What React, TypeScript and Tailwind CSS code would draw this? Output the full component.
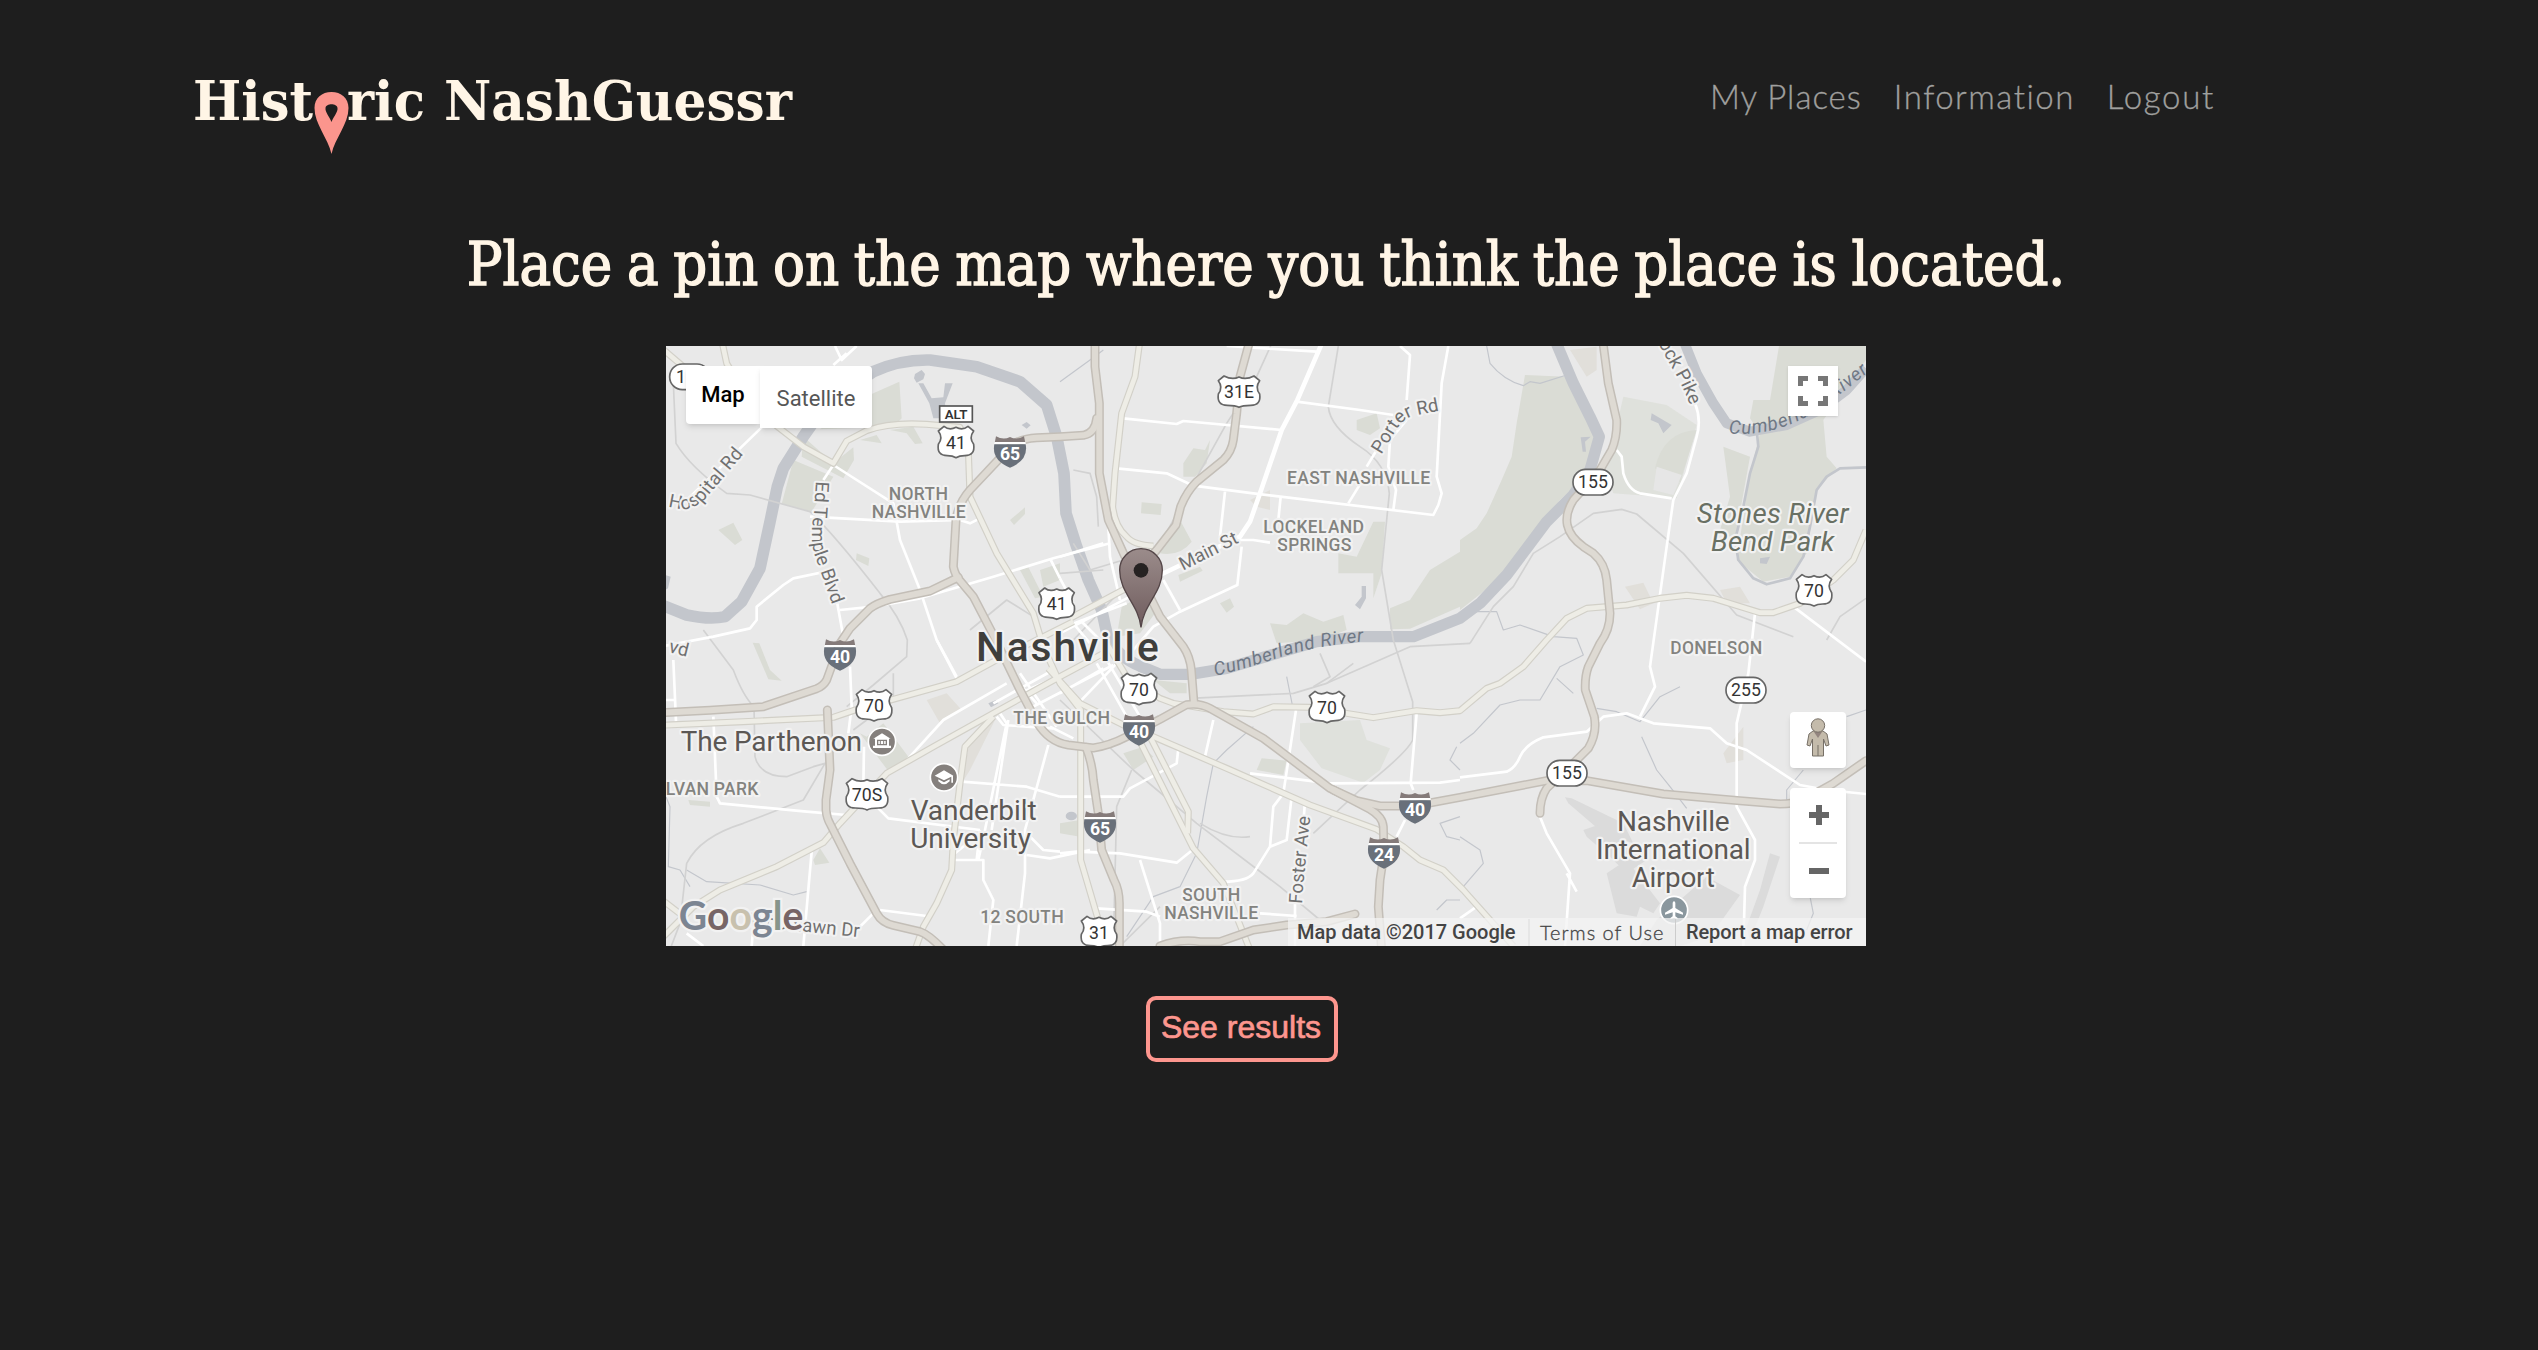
import React from "react";

const HIGHWAYS = [
  "M1305 0V80L1318 190V400L1345 540L1395 650L1470 770L1500 830L1570 920Q1590 950 1594 990L1602 1090",
  "M1310 235Q1305 280 1270 286L1200 290L1130 293Q1090 295 1060 312L1010 365L930 450Q895 490 888 540L880 680Q885 705 900 722L940 770L1000 885L1080 1050L1130 1145Q1165 1205 1225 1215L1300 1224Q1350 1216 1400 1190L1500 1138L1580 1094Q1620 1088 1650 1105L1810 1195L1930 1285L2010 1345L2090 1382L2160 1398H2260L2400 1372L2660 1322H2780L3010 1362L3240 1382L3360 1392Q3400 1392 3430 1380L3520 1330L3618 1262",
  "M895 712L810 753L690 778Q650 790 630 805L570 865L540 910L500 1020Q490 1038 470 1046L310 1100L150 1111L0 1118",
  "M502 1110L510 1290L498 1380V1410Q500 1435 512 1455L570 1570L650 1720Q665 1748 700 1756L780 1775Q810 1785 860 1840",
  "M1278 1222Q1297 1270 1300 1320L1315 1420L1325 1530L1362 1620Q1378 1650 1378 1690V1830",
  "M1500 1818Q1560 1796 1620 1805H1680L1780 1770L1880 1755L2000 1745L2085 1722",
  "M2020 1350L2130 1408Q2168 1430 2170 1460L2172 1540L2160 1620L2155 1700L2165 1830",
  "M1770 0L1740 110L1730 220L1720 300Q1715 335 1690 360L1610 425Q1580 455 1562 500L1548 555L1490 630L1430 700",
  "M2828 0L2845 130L2870 240Q2872 290 2855 330L2820 390L2740 480Q2715 520 2722 555T2770 620L2800 640Q2835 670 2840 720L2850 820Q2850 870 2820 910L2785 980Q2774 1010 2776 1050L2803 1130Q2812 1180 2785 1225L2740 1270L2660 1345Q2640 1375 2640 1420",
];
const ARTERIALS = [
  "M185 0L200 70L260 170L350 258L430 320L520 370L560 303L620 272Q690 246 800 253L900 262L925 330L930 470L1010 640L1120 820L1150 920L1200 1030L1262 1110L1262 1560L1315 1740",
  "M0 20L70 80",
  "M1440 0L1425 110L1385 220L1365 400L1358 500Q1365 560 1400 590Q1420 615 1480 618",
  "M1230 835L1380 755L1450 720",
  "M0 1156L250 1145L520 1132L600 1105L700 1078L890 1025L1000 965L1240 845",
  "M0 1800L100 1700L180 1650L350 1580L490 1508L540 1450L680 1300L820 1220L1000 1120L1200 1010L1340 935",
  "M0 1675L65 1725",
  "M1000 1130L915 1220L900 1330L880 1500L875 1590L830 1690L790 1760L765 1830",
  "M1165 985L1260 1090L1400 1160L1480 1190L1700 1285L1950 1395L2150 1468L2230 1520L2280 1560L2350 1590L2410 1650L2560 1818",
  "M1440 1205L1600 1525L1690 1630L1770 1830",
  "M1470 1190L1585 1415L1583 1480",
  "M1340 910L1400 1010L1500 1075L1540 1090L1690 1115L1780 1122L1840 1100L1950 1102L2060 1120L2140 1133L2270 1112L2340 1118L2400 1112L2480 1045L2520 1030L2590 980L2660 900L2720 835L2780 805L2900 795L3000 775L3080 766L3160 775L3300 818H3340L3420 790L3520 720L3580 660L3618 570",
];
const STREETS = [
  "M0 920L160 890L270 865L290 840V800L370 735L400 715L520 690",
  "M520 375L490 420M520 375L700 490L720 600L780 750L830 900L890 1015",
  "M305 262L60 500M525 18L545 60L590 18M520 75L560 40",
  "M450 530L720 545L900 540L930 550L960 535",
  "M530 780L550 890M540 810L640 800L780 775L1000 710L1180 655L1350 610",
  "M1170 655L1200 715M40 960L48 1145M0 1080H45M160 1130L170 1370L180 1390L440 1415L560 1425",
  "M570 980L575 1100L565 1180M612 1220L610 1340M745 1255L850 1140L1040 1030M830 900L890 1010",
  "M650 1400L685 1435L960 1470M905 1325L1100 1340L1200 1370M1020 1120L1040 1150L975 1470L955 1560M1045 1140L995 1470M1010 1130L1030 1155L1180 1165",
  "M455 1535L430 1818M660 1710L800 1728M640 1720L590 1770M880 1560H970V1620L1000 1680L985 1818",
  "M1165 1215L1150 1270L1095 1470L1095 1600L1070 1818M1110 1490L1150 1530L1200 1535M1100 1545L1170 1555L1290 1530",
  "M80 1780L130 1818M280 1760L275 1818M885 1540L960 1480M960 1470L950 1560",
  "M1390 235L1550 252L1570 243L1865 270M1370 385L1520 400L1600 437L1780 460L2320 525L2335 495L2345 460L2330 410L2345 130L2365 18",
  "M1695 455L1680 590M1862 470L1855 540M1700 18L1970 35M1910 185L2100 210L2200 225M2220 18L2250 45L2240 180M2340 200H2290",
  "M2120 380L2150 330M2120 400L2065 490M2240 240L2190 300L2185 380L2208 450L2200 510",
  "M1700 600L1780 600L1830 608M1745 620L1732 735L1560 815L1480 860L1420 930M1510 720L1560 810",
  "M1345 560L1350 650L1380 780M1200 650L1330 610M1200 880L1410 770M1200 715L1240 790M1240 850L1290 910M1260 840L1320 900M1190 870L1400 790",
  "M1050 1000L1130 1090M1000 1090L1180 990M1170 1160L1240 1195M1260 1085L1370 970M1100 1110L1360 975M1080 1060L1330 950M1080 1000L1190 1160M1340 960L1440 1130M1310 970L1400 1130M1200 1060L1330 985",
  "M1200 1370H1390L1410 1345L1550 1270L1555 1225M1200 1540L1250 1535L1380 1540L1550 1568L1600 1528M1440 1560L1500 1750L1500 1818M1310 1705L1460 1715L1500 1730",
  "M1660 1140L1635 1250M1908 1110L1870 1360L1840 1400L1830 1520L1780 1600Q1760 1625 1690 1625M1895 1370L1880 1500L1830 1520M1935 1385L1930 1450M1770 1300L2010 1330L2340 1328L2400 1320",
  "M2270 1120L2252 1330L2260 1350M2235 1440L2210 1490M1905 1690V1818M1800 1720L1910 1728",
  "M2400 1312L2540 1295Q2565 1285 2580 1250T2650 1192L2780 1175L2830 1130L2900 1120L2980 1150L3150 1165L3200 1210L3260 1230L3420 1335L3500 1350L3618 1362",
  "M2870 330L2885 350L2890 400Q2905 450 2940 460L3035 475M3105 190Q3125 240 3110 290L3080 400L3040 480L3020 620L2970 980L2985 1040L2940 1130",
  "M3285 820L3265 1000L3230 1150L3230 1400L3285 1500L3285 1560L3255 1640L3250 1818M3400 800L3618 965M2640 1430L2660 1480L2730 1600L2715 1818M2720 1600L2750 1655",
  "M2400 1735L2450 1700",
];
const RAILS = [
  "M40 130L48 310Q90 380 200 460L270 465L450 515Q520 580 660 760Q720 830 742 900L740 950L640 1035L560 1100",
  "M130 870L220 990Q250 1070 282 1100L285 1250Q300 1310 380 1310L460 1280L495 1270L430 1380L250 1450Q120 1490 80 1570L60 1750L18 1860",
  "M700 1000V1080L580 1170M930 870L1040 780L1120 830",
  "M2035 18L2005 200Q2010 260 2100 320Q2180 370 2188 460L2165 690L2200 900L2258 1085V1200Q2240 1240 2100 1350L1960 1480",
  "M1832 18L1790 110L1700 250L1600 430L1480 650L1240 900",
  "M1200 1080L1420 1290L1610 1450L1860 1640L1980 1740M1620 1450Q1700 1500 1770 1490M1590 1075L1900 1060L2000 1030L2250 920L2430 910",
  "M2430 910L2500 800L2560 740L2620 640L2700 590L2800 520L2885 508L2930 522L3070 640L3230 825L3400 890M3618 775L3540 830L3500 900",
  "M1240 390L1290 400L1310 470L1315 560M1200 700L1330 690M1240 610L1290 690L1390 660",
  "M1415 1290L1370 1400L1360 1818M1380 1818L1500 1700M1980 940L2010 1010L1960 1040M2000 1030L2080 970",
];
const CREEKS = [
  "M2480 18L2490 70Q2530 120 2590 137L2610 125L2640 130L2720 105",
  "M80 1590L140 1625L300 1635L400 1665L440 1655M18 1370L30 1400L25 1580L60 1590L90 1640",
  "M1200 125L1290 60L1330 30M1880 1010L1900 1110M1780 1160L1700 1230L1660 1270L1640 1370L1610 1540L1560 1640L1480 1670L1400 1790",
  "M2440 815L2510 815L2530 870L2580 855L2680 890L2750 895L2770 945L2700 980L2640 1080L2580 1080L2520 1095L2440 1180L2400 1210",
  "M2690 1015L2740 1060M2810 1105L2870 1115L2940 1145L2960 1120L3000 1070L3060 1040M2945 1190L2990 1290L3030 1340L3080 1405",
  "M2400 1490L2460 1530L2470 1570L2410 1640M3618 1110L3560 1130M3380 1390V1350L3430 1290M3450 1670L3460 1720L3440 1770",
  "M2390 1220L2370 1260L2400 1290M2400 1430L2340 1450L2360 1490L2400 1500M2330 1710L2360 1680L2400 1680",
];
const PARKS = [
  "M400 360L520 410L455 515L365 492Z",
  "M430 290L520 370L580 322L582 360L550 415L425 350Z",
  "M640 160L718 125L725 235L700 260L480 268Z",
  "M600 300L650 285L665 310ZM690 270L760 260L788 310L765 312L740 280Z",
  "M175 570L220 548L247 600L225 615ZM1050 540L1095 502L1095 522L1062 555ZM590 640L628 655L625 678L588 660Z",
  "M1080 690L1105 682L1150 770L1125 775ZM1140 690L1200 670V720L1150 740ZM1385 800L1440 770L1500 800L1440 880L1370 890Z",
  "M278 908L298 910L330 990L365 1022L325 1018Z",
  "M620 1190L670 1150L745 1250L690 1300L600 1180Z",
  "M460 1560L480 1525L508 1568L465 1575ZM85 1380L150 1385V1400L90 1395Z",
  "M1570 370L1600 325L1635 330L1650 300L1640 370L1605 410L1570 410Z",
  "M1445 487L1505 492L1502 525L1443 520Z",
  "M1560 540L1595 605Q1560 650 1500 640ZM1555 705L1620 680L1628 692L1560 725ZM1680 790L1710 775L1722 800L1700 818Z",
  "M2090 240L2150 220L2160 265L2130 285L2090 270Z",
  "M2140 545L2175 545L2165 700L2140 775V700H2035V640L2090 650Z",
  "M2190 805L2250 780L2310 690L2400 635V800L2250 866L2190 868Z",
  "M1830 850L1880 855L1930 820L1990 845L2050 825L2060 870L1980 900L1850 910Z",
  "M2595 105L2720 110L2820 260L2790 400L2700 480L2540 700L2400 810V600L2450 565L2480 520L2525 420L2555 350L2570 250Z",
  "M3190 320L3270 350L3225 600L3180 570L3210 470Z",
  "M3360 0H3618V60L3540 170L3490 240L3500 350L3530 385L3470 450L3440 640L3390 710L3310 725L3230 660L3270 400L3300 280L3270 235L3280 180H3330Z",
  "M1805 1255L1880 1262L1870 1305L1790 1290Z",
  "M1200 1450L1260 1440V1490L1200 1480ZM1390 1240L1450 1220L1480 1250L1420 1290ZM1480 1020L1580 1030V1060L1530 1060Z",
];
const PALE_PARKS = [
  "M2890 170L3020 195L3110 255L3050 475L2860 460L2830 380L2860 300Z",
  "M1920 1150L2100 1140L2120 1200L2190 1225L2160 1290L2110 1328L1985 1285L1920 1200Z",
];
const LAND = [
  "M2730 30L2810 20V90L2780 110ZM2895 740L2950 728L2980 790L2940 808ZM3180 750L3240 740L3270 790L3200 790Z",
  "M1770 480L1830 450V510L1790 500ZM930 1200L1010 1130L930 1290L905 1330Z",
  "M800 1080L860 1060L905 1110L840 1150ZM3190 1240L3250 1160V1260L3200 1270Z",
];
const AIRPORT = [
  "M2715 1372L2735 1375L2890 1450L2920 1510L2830 1480L2725 1390Z",
  "M2770 1470L2830 1450L2960 1560L2900 1600L2850 1550L2780 1490Z",
  "M2840 1600L2900 1560L3000 1690L2980 1720L2940 1700L2930 1730L2870 1720Z",
  "M3060 1680L3140 1610L3240 1665L3150 1790L3060 1818H2940L2990 1740Z",
  "M3330 1540L3360 1550L3310 1700L3270 1800L3260 1760L3300 1650Z",
];

type Label = { t: string; x: number; y: number; w: number; s?: number; c?: string; wt?: number; i?: boolean };
const LABELS: Label[] = [
  { t: "NORTH", x: 775, y: 480, w: 178 },
  { t: "NASHVILLE", x: 776, y: 534, w: 282 },
  { t: "EAST NASHVILLE", x: 2096, y: 432, w: 430 },
  { t: "LOCKELAND", x: 1961, y: 579, w: 302 },
  { t: "SPRINGS", x: 1963, y: 633, w: 222 },
  { t: "THE GULCH", x: 1205, y: 1151, w: 290 },
  { t: "LVAN PARK", x: 156, y: 1364, w: 278 },
  { t: "12 SOUTH", x: 1086, y: 1750, w: 250 },
  { t: "SOUTH", x: 1654, y: 1682, w: 174 },
  { t: "NASHVILLE", x: 1654, y: 1736, w: 282 },
  { t: "DONELSON", x: 3169, y: 942, w: 276 },
  { t: "Nashville", x: 1222, y: 963, w: 548, s: 122, wt: 500, c: "#3f3f3c" },
  { t: "The Parthenon", x: 334, y: 1232, w: 544, s: 84, wt: 400, c: "#5c5855" },
  { t: "Vanderbilt", x: 941, y: 1439, w: 378, s: 84, wt: 400, c: "#5c5855" },
  { t: "University", x: 932, y: 1524, w: 362, s: 84, wt: 400, c: "#5c5855" },
  { t: "Nashville", x: 3040, y: 1472, w: 338, s: 84, wt: 400, c: "#5c5855" },
  { t: "International", x: 3040, y: 1556, w: 464, s: 84, wt: 400, c: "#5c5855" },
  { t: "Airport", x: 3040, y: 1640, w: 250, s: 84, wt: 400, c: "#5c5855" },
  { t: "Stones River", x: 3338, y: 548, w: 456, s: 83, wt: 400, i: true, c: "#697064" },
  { t: "Bend Park", x: 3338, y: 632, w: 370, s: 83, wt: 400, i: true, c: "#697064" },
];

type Curved = { id: string; t: string; d: string; ls?: number; water?: boolean };
const CURVED: Curved[] = [
  { id: "hospital", t: "Hospital Rd", d: "M24 500L66 508Q100 508 135 478L262 328", ls: 1 },
  { id: "temple", t: "Ed Temple Blvd", d: "M468 424L462 520Q450 590 462 640L530 830", ls: 0 },
  { id: "main", t: "Main St", d: "M1569 692L1760 596" },
  { id: "porter", t: "Porter Rd", d: "M2164 344L2210 268Q2228 238 2258 228L2340 212" },
  { id: "pike", t: "ock Pike", d: "M2995 10L3045 100Q3070 140 3100 220" },
  { id: "foster", t: "Foster Ave", d: "M1926 1692Q1928 1640 1954 1400" },
  { id: "cumberland", t: "Cumberland River", d: "M1666 1008Q1760 985 1850 955Q1980 910 2180 900", ls: 2, water: true },
  { id: "cumberland2", t: "Cumberland River", d: "M3206 280Q3330 290 3440 230Q3540 170 3680 50", ls: 3, water: true },
  { id: "woodlawn", t: "Woodlawn Dr", d: "M268 1758L640 1796" },
];

function UsShield({ x, y, n }: { x: number; y: number; n: string }) {
  const w = n.length > 2 ? 9 : 0;
  return (
    <g transform={`translate(${x} ${y})`}>
      <path
        d={`M${-36 - w} -46Q-20 -33 0 -43Q20 -33 ${36 + w} -46L${53 + w} -32Q${38 + w} -12 ${53 + w} 8Q${58 + w} 42 ${26 + w} 42Q10 42 0 48Q-10 42 ${-26 - w} 42Q${-58 - w} 42 ${-53 - w} 8Q${-38 - w} -12 ${-53 - w} -32Z`}
        fill="#fff" stroke="#666" strokeWidth="5" strokeLinejoin="round"
      />
      <text y="21" textAnchor="middle" fontSize="53" fill="#333">{n}</text>
    </g>
  );
}

function Interstate({ x, y, n }: { x: number; y: number; n: string }) {
  return (
    <g transform={`translate(${x} ${y})`}>
      <path d="M-42 -46Q-20 -34 0 -44Q20 -34 42 -46L46 -26H-46Z" fill="#857b7a" />
      <path d="M-47 -22H47Q56 26 0 48Q-56 26 -47 -22Z" fill="#69707a" />
      <path d="M-47 -26H47" stroke="#fff" strokeWidth="6" />
      <text y="24" textAnchor="middle" fontSize="53" fontWeight="700" fill="#fff">{n}</text>
    </g>
  );
}

function StateRoute({ x, y, n }: { x: number; y: number; n: string }) {
  return (
    <g transform={`translate(${x} ${y})`}>
      <rect x="-60" y="-38" width="120" height="77" rx="38" fill="#fff" stroke="#666" strokeWidth="5" />
      <text y="19" textAnchor="middle" fontSize="53" fill="#333">{n}</text>
    </g>
  );
}

function MapCanvas() {
  return (
    <svg viewBox="18 18 3600 1800" className="block h-full w-full" fontFamily="Roboto, sans-serif" fill="none">
      <rect width="3700" height="1900" fill="#e9e9e9" />
      <g fill="#e1dfda">{LAND.map((d) => <path key={d} d={d} />)}</g>
      <g fill="#dfe1dc">{PALE_PARKS.map((d) => <path key={d} d={d} />)}</g>
      <g fill="#dadcd5">{PARKS.map((d) => <path key={d} d={d} />)}</g>
      <g fill="#dbdbdb">{AIRPORT.map((d) => <path key={d} d={d} />)}</g>
      <path d="M3060 425L3110 270Q3010 275 2985 385Z" fill="#dadcd5" />
      <path d="M2990 380L3065 405L3040 465L2980 450Z" fill="#e6e6e6" />
      <g stroke="#c3c6cc" strokeLinejoin="round">
        <path d="M0 793L80 825Q150 840 195 830L245 785L300 685L330 545L352 440L370 385L430 290L500 190L640 95Q720 58 810 60L950 80L1080 125L1160 195L1190 290L1212 400L1218 520L1250 620L1285 720L1325 810L1345 900Q1390 965 1460 985" strokeWidth="35" />
        <path d="M1440 978L1500 1003H1590L1700 985L1850 940L1970 905L2100 890H2260L2400 835L2460 790L2540 705L2600 625L2660 545L2740 465L2790 390L2818 290L2790 230L2740 130L2685 0" strokeWidth="34" />
        <path d="M3070 0L3110 100L3160 190L3200 250L3270 275L3380 255L3480 210L3560 150L3618 85" strokeWidth="30" />
        <path d="M3290 270L3295 320L3270 400L3250 500L3225 600L3235 660L3280 715L3320 733L3390 715L3430 650L3450 560L3470 450L3500 410L3540 385L3618 382" strokeWidth="8" />
        {CREEKS.map((d) => <path key={d} d={d} strokeWidth="3.5" />)}
      </g>
      <g fill="#c3c6cc">
        <path d="M765 102L785 90L795 102L790 118L770 128L762 115ZM775 130H790L815 175L850 172L855 130H878L855 190L860 235L820 235L808 190Z" />
        <path d="M2975 220L3035 255L3010 280L2995 250L2972 240ZM2762 292L2792 290L2775 305L2778 335L2768 335ZM2105 738H2118V775L2100 808L2085 795L2105 770Z" />
        <path d="M1085 255L1100 246L1112 256L1100 266ZM0 700L32 710L24 745L0 760ZM985 1090L1008 1080L1015 1090L993 1102ZM3300 655L3330 650L3320 672L3300 670Z" />
        <ellipse cx="1234" cy="1428" rx="17" ry="13" />
      </g>
      <g stroke="#d2d2d2" strokeWidth="5" strokeLinejoin="round">{RAILS.map((d) => <path key={d} d={d} />)}</g>
      <g stroke="#fff" strokeWidth="8" strokeLinejoin="round">{STREETS.map((d) => <path key={d} d={d} />)}</g>
      <path d="M1990 0L1912 180L1865 270L1800 460L1770 545L1740 590L1500 705" stroke="#fff" strokeWidth="14" />
      <g stroke="#d2d0c8" strokeWidth="21" strokeLinejoin="round">{ARTERIALS.map((d) => <path key={d} d={d} />)}</g>
      <g stroke="#eeede6" strokeWidth="14" strokeLinejoin="round">{ARTERIALS.map((d) => <path key={d} d={d} />)}</g>
      <g stroke="#c3beb7" strokeWidth="27" strokeLinejoin="round" strokeLinecap="round">{HIGHWAYS.map((d) => <path key={d} d={d} />)}</g>
      <g stroke="#dedad3" strokeWidth="18" strokeLinejoin="round" strokeLinecap="round">{HIGHWAYS.map((d) => <path key={d} d={d} />)}</g>

      <g stroke="#f2f2f2" strokeWidth="13" strokeLinejoin="round" paintOrder="stroke">
        {LABELS.map((l) => (
          <text
            key={l.t + l.x + l.y} x={l.x} y={l.y} textAnchor="middle" textLength={l.w}
            fontSize={l.s ?? 53} fontWeight={l.wt ?? 500} fill={l.c ?? "#83837f"}
            fontStyle={l.i ? "italic" : "normal"}
          >
            {l.t}
          </text>
        ))}
        {CURVED.map((c) => (
          <g key={c.id}>
            <path id={c.id} d={c.d} stroke="none" />
            <text
              fontSize="56" letterSpacing={c.ls ?? 0} fill={c.water ? "#6f7885" : "#707070"}
              fontStyle={c.water ? "italic" : "normal"} stroke={c.water ? "none" : "#f2f2f2"}
            >
              <textPath href={`#${c.id}`}>{c.t}</textPath>
            </text>
          </g>
        ))}
        <text fontSize="56" fill="#707070" transform="translate(24 936) rotate(14)">vd</text>
      </g>

      <rect x="839" y="198" width="98" height="48" fill="#fff" stroke="#555" strokeWidth="5" />
      <text x="888" y="237" textAnchor="middle" fontSize="40" fontWeight="600" fill="#333">ALT</text>
      <UsShield x={888} y={305} n="41" />
      <UsShield x={1190} y={790} n="41" />
      <UsShield x={1737} y={154} n="31E" />
      <UsShield x={3462} y={750} n="70" />
      <UsShield x={642} y={1095} n="70" />
      <UsShield x={621} y={1362} n="70S" />
      <UsShield x={1437} y={1046} n="70" />
      <UsShield x={2001} y={1100} n="70" />
      <UsShield x={1317} y={1775} n="31" />
      <Interstate x={1050} y={335} n="65" />
      <Interstate x={540} y={944} n="40" />
      <Interstate x={1437} y={1169} n="40" />
      <Interstate x={1320} y={1460} n="65" />
      <Interstate x={2265} y={1403} n="40" />
      <Interstate x={2172} y={1538} n="24" />
      <StateRoute x={2799} y={426} n="155" />
      <StateRoute x={3258} y={1050} n="255" />
      <StateRoute x={2721} y={1299} n="155" />
      <g transform="translate(88 110)">
        <rect x="-59" y="-38" width="120" height="77" rx="38" fill="#fff" stroke="#666" strokeWidth="5" />
        <text x="-40" y="19" fontSize="53" fill="#333">1</text>
      </g>

      <g transform="translate(666 1205)">
        <circle r="41" fill="#85807d" stroke="#fff" strokeWidth="5" />
        <path d="M-26 -9L0 -25L26 -9ZM-21 -9H21V12H-21ZM-27 12H27V19H-27Z" fill="#fff" />
        <path d="M-13 -4H13V9H-13Z" stroke="#85807d" strokeWidth="4" />
        <path d="M-5 -4V9M5 -4V9" stroke="#85807d" strokeWidth="3" />
      </g>
      <g transform="translate(852 1312)">
        <circle r="41" fill="#85807d" stroke="#fff" strokeWidth="5" />
        <path d="M-28 -5L0 -21L28 -5L0 9ZM-17 6L0 15L17 6V12Q0 30 -17 12ZM22 -4H27V16H22Z" fill="#fff" />
      </g>
      <g transform="translate(3042 1710)">
        <circle r="41" fill="#8a979e" stroke="#fff" strokeWidth="5" />
        <path d="M-4 -22Q0 -30 4 -22V-6L27 8V14L4 7V19L11 24V28L0 25L-11 28V24L-4 19V7L-27 14V8L-4 -6Z" fill="#fff" />
      </g>

      <defs>
        <linearGradient id="pin" x1="0" x2="0" y1="0" y2="1">
          <stop offset="0" stopColor="#9b8c8b" />
          <stop offset="1" stopColor="#6f5c5d" />
        </linearGradient>
      </defs>
      <path d="M1443 862C1435 790 1379 760 1379 690A64 64 0 0 1 1507 690C1507 760 1451 790 1443 862Z" fill="url(#pin)" stroke="#544648" strokeWidth="4" />
      <circle cx="1443" cy="691" r="22" fill="#262222" />

      <text x="56" y="1771" textLength="374" lengthAdjust="spacingAndGlyphs" fontFamily="Lato, sans-serif" fontWeight="700" fontSize="118" stroke="#f2f2f2" strokeWidth="14" paintOrder="stroke">
        <tspan fill="#7c8592">G</tspan><tspan fill="#776566">o</tspan><tspan fill="#c8c1ae">o</tspan><tspan fill="#7c8592">g</tspan><tspan fill="#87958b">l</tspan><tspan fill="#776566">e</tspan>
      </text>
    </svg>
  );
}

function Logo() {
  return (
    <svg width="620" height="114" viewBox="182 54 620 114" className="block" fill="#fff5e6" fontFamily="'DejaVu Serif Condensed', 'DejaVu Serif', serif" fontWeight="700" fontSize="54">
      <text x="193" y="120" textLength="120" lengthAdjust="spacingAndGlyphs">Hist</text>
      <text x="347" y="120" textLength="78" lengthAdjust="spacingAndGlyphs">ric</text>
      <text x="444" y="120" textLength="348" lengthAdjust="spacingAndGlyphs">NashGuessr</text>
      <path fillRule="evenodd" fill="#fb958d" d="M331.500 154C328 138 314.500 124 314.500 108C314.500 98 322 92 331.500 92S348.500 98 348.500 108C348.500 124 335 138 331.500 154ZM331.500 122C334 116 338 112 337.500 108C337 103 326 103 325.500 108C325 112 329 116 331.500 122Z" />
    </svg>
  );
}

export default function App() {
  return (
    <div className="flex h-[1350px] w-full flex-col bg-[#1e1e1e]">
      <header className="flex h-[228px] items-start justify-between pt-[54px] pr-[323px] pl-[182px]">
        <Logo />
        <nav className="flex gap-[32px] pt-[19px] font-[Lato,sans-serif] text-[33px] leading-[46px] font-light tracking-[1px] whitespace-nowrap text-[#a0a09f] [-webkit-text-stroke:0.3px_#a0a09f]">
          <a>My Places</a>
          <a className="tracking-[1.5px]">Information</a>
          <a className="tracking-[1.7px]">Logout</a>
        </nav>
      </header>

      <main className="flex flex-col pl-[666px]">
        <h1 className="-ml-[400px] flex h-[118px] w-[2000px] justify-center pt-px font-['DejaVu_Serif_Condensed','DejaVu_Serif',serif] text-[59px] leading-[72px] font-normal [word-spacing:-2.2px] whitespace-nowrap text-[#fff5e6] [-webkit-text-stroke:1.4px_#fff5e6]">
          Place a pin on the map where you think the place is located.
        </h1>

        <section className="relative h-[600px] w-[1200px] overflow-hidden font-[Roboto,sans-serif]">
          <MapCanvas />

          <div className="absolute top-5 left-5 flex items-start text-[22px] leading-none">
            <button className="h-[58px] w-[74px] rounded-l-[4px] bg-white pb-[1px] font-medium text-black shadow-md">Map</button>
            <button className="h-[62px] w-[112px] rounded-r-[4px] bg-white pt-[3px] text-[#565656] shadow-md">Satellite</button>
          </div>

          <button className="absolute top-5 right-7 flex size-[50px] items-center justify-center bg-white shadow-sm">
            <svg viewBox="0 0 30 30" className="size-[30px]" fill="none" stroke="#777" strokeWidth="5">
              <path d="M2.500 10V2.500H10M20 2.500H27.500V10M27.500 20V27.500H20M10 27.500H2.500V20" />
            </svg>
          </button>

          <div className="absolute right-5 bottom-12 flex w-14 flex-col gap-5">
            <button className="flex h-14 items-center justify-center rounded-[4px] bg-white pb-1 shadow-md">
              <svg viewBox="0 0 24 40" className="h-10 w-6" fill="#c4bbab" stroke="#777067" strokeWidth="1">
                <path d="M7 13L3 16L1 27L4 28L6.500 21V38H17.500V21L20 28L23 27L21 16L17 13Z" />
                <path d="M12 27V38" />
                <path d="M8 14H16L12 20Z" fill="#93857f" stroke="none" />
                <circle cx="12" cy="7.500" r="6.700" />
              </svg>
            </button>
            <div className="flex h-[110px] flex-col items-center rounded-[4px] bg-white shadow-md">
              <button className="flex h-[54px] w-full items-center justify-center pl-[2px]">
                <svg viewBox="0 0 20 20" className="size-5" stroke="#666" strokeWidth="6"><path d="M0 10H20M10 0V20" /></svg>
              </button>
              <div className="h-[2px] w-[38px] bg-[#e4e4e4]" />
              <button className="flex h-[54px] w-full items-center justify-center pl-[2px]">
                <svg viewBox="0 0 20 20" className="size-5" stroke="#666" strokeWidth="6"><path d="M0 10H20" /></svg>
              </button>
            </div>
          </div>

          <div className="absolute right-0 bottom-0 flex h-7 w-[578px] items-center bg-[#f3f3f3]/75 pt-[1px] text-[20px] leading-[27px] whitespace-nowrap text-[#444]">
            <span className="w-[240px] pl-[9px] font-medium">Map data ©2017 Google</span>
            <span className="w-[147px] border-l-2 border-[#e6e6e6] pl-[10px] font-[Lato,sans-serif] font-light tracking-[0.05em] [-webkit-text-stroke:0.3px_#444]">Terms of Use</span>
            <span className="border-l border-[#ccc] pl-[10px] font-medium tracking-[-0.1px]">Report a map error</span>
          </div>
        </section>

        <button className="mt-[50px] ml-[480px] h-[66px] w-48 rounded-[10px] border-4 border-[#fd968e] pr-[6px] pb-1 pl-[4px] font-['Liberation_Sans',sans-serif] text-[32px] leading-none whitespace-nowrap text-[#fd968e] [-webkit-text-stroke:0.7px_#fd968e]">
          See results
        </button>
      </main>
    </div>
  );
}
